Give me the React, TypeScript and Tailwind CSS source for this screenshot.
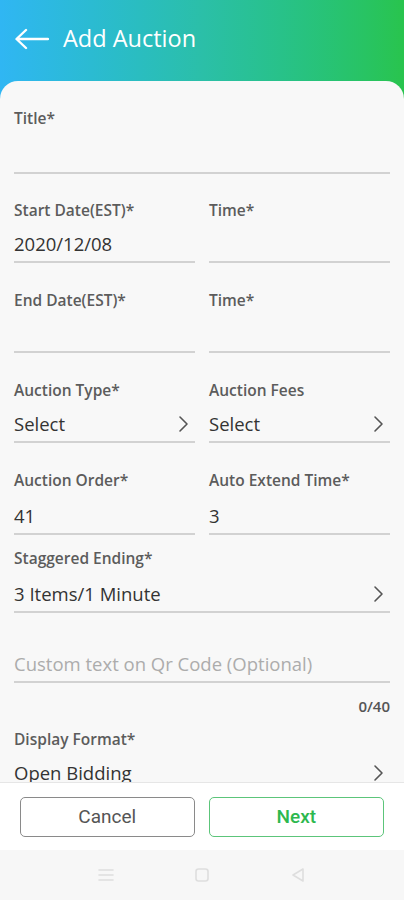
import React from 'react';

const Chevron = () => (
  <svg width="12" height="18" viewBox="0 0 12 18" className="shrink-0">
    <polyline points="3,2 10,9 3,16" fill="none" stroke="#555" strokeWidth="1.6" strokeLinecap="round" strokeLinejoin="round" />
  </svg>
);

const Label: React.FC<{ children: React.ReactNode }> = ({ children }) => (
  <p className="h-5 text-[15.5px] leading-5 font-semibold text-[#5c5c5c] whitespace-nowrap">{children}</p>
);

const Field: React.FC<{ label: string; value?: string; chevron?: boolean; className?: string; valueH?: string }> = ({
  label,
  value,
  chevron,
  className,
  valueH,
}) => (
  <div className={'flex-1 min-w-0 ' + (className || '')}>
    <Label>{label}</Label>
    <div className={(valueH || 'h-[41px]') + ' flex items-end pb-[5px] pr-[6px]'}>
      <div className="h-6 flex-1 flex items-center justify-between">
        <span className="text-[18.5px] leading-6 text-[#333]">{value}</span>
        {chevron && <Chevron />}
      </div>
    </div>
    <div className="h-[2px] bg-[#d2d2d2]" />
  </div>
);

export default function App() {
  return (
    <div className="w-[404px] h-[900px] flex flex-col bg-white" style={{ fontFamily: '"Open Sans", "Noto Sans", sans-serif' }}>
      {/* header + form card */}
      <div className="bg-gradient-to-r from-[#30b6f3] via-[#2bbfa8] to-[#29c44d] h-[782px] flex flex-col">
        <div className="h-[81px] shrink-0 flex items-center pl-[14px] pb-[3px] gap-[14px]">
          <svg width="35" height="22" viewBox="0 0 35 22">
            <path d="M34 11H3M12 2L2.5 11L12 20" fill="none" stroke="white" strokeWidth="2.4" strokeLinecap="round" strokeLinejoin="round" />
          </svg>
          <h1 className="text-[23.5px] text-white leading-none">Add Auction</h1>
        </div>
        <div className="flex-1 bg-[#f8f8f8] rounded-t-[18px] overflow-hidden px-[14px] pt-[27px] flex flex-col">
          <Field label="Title*" valueH="h-[44px]" className="flex-none" />

          <div className="flex gap-[14px] mt-[26px]">
            <Field label="Start Date(EST)*" value="2020/12/08" />
            <Field label="Time*" />
          </div>
          <div className="flex gap-[14px] mt-[27px]">
            <Field label="End Date(EST)*" />
            <Field label="Time*" />
          </div>
          <div className="flex gap-[14px] mt-[27px]">
            <Field label="Auction Type*" value="Select" chevron />
            <Field label="Auction Fees" value="Select" chevron />
          </div>
          <div className="flex gap-[14px] mt-[27px]">
            <Field label="Auction Order*" value="41" valueH="h-[43px]" />
            <Field label="Auto Extend Time*" value="3" valueH="h-[43px]" />
          </div>
          <Field label="Staggered Ending*" value="3 Items/1 Minute" chevron valueH="h-[43px]" className="flex-none mt-[13px]" />

          <div className="mt-[39px]">
            <div className="h-6 flex items-center">
              <span className="text-[18.5px] leading-6 text-[#acacac] whitespace-nowrap">Custom text on Qr Code (Optional)</span>
            </div>
            <div className="h-[2px] bg-[#d2d2d2] mt-[5px]" />
            <p className="text-right text-[15px] leading-5 font-semibold text-[#555] mt-[13px]">0/40</p>
          </div>

          <div className="mt-[13px]">
            <Label>Display Format*</Label>
            <div className="h-6 mt-[12px] flex items-center justify-between pr-[6px]">
              <span className="text-[18.5px] leading-6 text-[#333]">Open Bidding</span>
              <Chevron />
            </div>
          </div>
        </div>
      </div>

      {/* actions */}
      <div className="h-[68px] bg-white border-t border-[#e6e6e6] flex items-start pt-[14px] px-[20px] gap-[14px]" style={{ fontFamily: 'Roboto, "Noto Sans", sans-serif' }}>
        <button className="w-[175px] h-[40px] rounded-[5px] border-[1.5px] border-[#8a8a8a] text-[19px] text-[#555]">Cancel</button>
        <button className="w-[176px] h-[40px] rounded-[5px] border-[1.5px] border-[#5cc57a] text-[19px] font-medium text-[#2db84e]">Next</button>
      </div>

      {/* system nav */}
      <div className="h-[50px] bg-[#f7f7f7] flex items-center justify-center gap-[80px]">
        <svg width="16" height="14" viewBox="0 0 16 14">
          <path d="M1 2H15M1 7H15M1 12H15" stroke="#dedede" strokeWidth="1.6" strokeLinecap="round" />
        </svg>
        <svg width="16" height="16" viewBox="0 0 16 16">
          <rect x="2" y="2" width="12" height="12" rx="2.5" fill="none" stroke="#dedede" strokeWidth="1.6" />
        </svg>
        <svg width="16" height="16" viewBox="0 0 16 16">
          <path d="M13 2L3 8L13 14Z" fill="none" stroke="#dedede" strokeWidth="1.6" strokeLinejoin="round" />
        </svg>
      </div>
    </div>
  );
}
